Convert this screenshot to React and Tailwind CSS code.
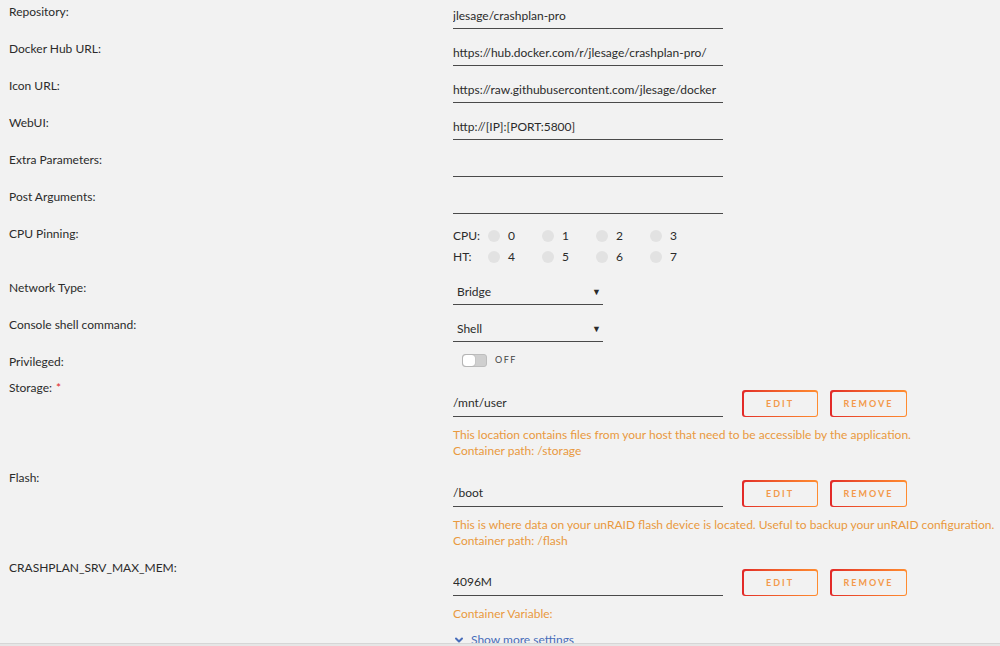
import { ChevronDown } from "lucide-react";

const textRows = [
  { label: "Repository:", value: "jlesage/crashplan-pro" },
  { label: "Docker Hub URL:", value: "https://hub.docker.com/r/jlesage/crashplan-pro/" },
  { label: "Icon URL:", value: "https://raw.githubusercontent.com/jlesage/docker" },
  { label: "WebUI:", value: "http://[IP]:[PORT:5800]" },
  { label: "Extra Parameters:", value: "" },
  { label: "Post Arguments:", value: "" },
];

const paths = [
  {
    label: "Storage:",
    required: true,
    value: "/mnt/user",
    desc: ["This location contains files from your host that need to be accessible by the application.", "Container path: /storage"],
  },
  {
    label: "Flash:",
    value: "/boot",
    desc: ["This is where data on your unRAID flash device is located. Useful to backup your unRAID configuration.", "Container path: /flash"],
  },
];

function Label({ children, required }) {
  return (
    <div className="w-[444px] shrink-0 pt-[4px] leading-4 text-[12px] text-[#2b2b2b]">
      {children}
      {required && <span className="ml-1 text-[#e22828]">*</span>}
    </div>
  );
}

function Input({ value, className = "" }) {
  return (
    <div className={"w-[270px] flex items-center overflow-hidden whitespace-nowrap border-b border-[#4a4a4a] text-[12px] text-[#2b2b2b] " + className}>
      {value}
    </div>
  );
}

function OutlineButton({ children, width }) {
  return (
    <div className={"h-[27px] rounded-[3px] bg-gradient-to-r from-[#e22828] to-[#ff8c2f] p-[1.5px] " + width}>
      <div className="flex h-full items-center justify-center rounded-[2px] bg-[#f2f2f2] text-[9px] font-bold tracking-[2px] text-[#f39a4c]">
        {children}
      </div>
    </div>
  );
}

function ButtonPair() {
  return (
    <div className="ml-[19px] flex gap-[12px]">
      <OutlineButton width="w-[76px]">EDIT</OutlineButton>
      <OutlineButton width="w-[77px]">REMOVE</OutlineButton>
    </div>
  );
}

function PathRow({ label, required, value, desc }) {
  return (
    <div className="flex">
      <Label required={required}>{label}</Label>
      <div className="pt-[14px] pb-[7px]">
        <div className="flex items-center">
          <Input value={value} className="h-[27px]" />
          <ButtonPair />
        </div>
        <div className="mt-[10px] text-[12px] leading-4 text-[#e9993e] whitespace-nowrap">
          {desc.map((d) => (
            <div key={d}>{d}</div>
          ))}
        </div>
      </div>
    </div>
  );
}

function Select({ value }) {
  return (
    <div className="mt-[3px] flex h-[26px] w-[150px] items-center justify-between border-b border-[#4a4a4a] pl-[4px] pr-[2px] text-[12px] text-[#2b2b2b]">
      <span>{value}</span>
      <span className="text-[9px]">▼</span>
    </div>
  );
}

function CpuLine({ name, cores }) {
  return (
    <div className="flex h-[21px] items-center text-[12px] text-[#2b2b2b]">
      <span className="w-[35px]">{name}</span>
      {cores.map((c) => (
        <div key={c} className="flex w-[54px] items-center">
          <span className="h-[12px] w-[12px] rounded-full bg-[#e2e2e2]" />
          <span className="ml-[8px]">{c}</span>
        </div>
      ))}
    </div>
  );
}

export default function App() {
  return (
    <div className="flex h-[646px] flex-col overflow-hidden bg-[#f2f2f2]" style={{ fontFamily: "Lato, 'Open Sans', sans-serif" }}>
      <div className="flex-1 overflow-hidden pl-[9px]">
        {textRows.map((r) => (
          <div key={r.label} className="flex h-[37px]">
            <Label>{r.label}</Label>
            <Input value={r.value} className="mt-[3px] h-[26px]" />
          </div>
        ))}

        <div className="flex h-[54px]">
          <Label>CPU Pinning:</Label>
          <div className="pt-[3px]">
            <CpuLine name="CPU:" cores={[0, 1, 2, 3]} />
            <CpuLine name="HT:" cores={[4, 5, 6, 7]} />
          </div>
        </div>

        <div className="flex h-[37px]">
          <Label>Network Type:</Label>
          <Select value="Bridge" />
        </div>
        <div className="flex h-[37px]">
          <Label>Console shell command:</Label>
          <Select value="Shell" />
        </div>

        <div className="flex h-[26px]">
          <Label>Privileged:</Label>
          <div className="ml-[9px] flex h-[20px] items-center">
            <div className="flex h-[13px] w-[25px] items-center rounded-[3px] border border-[#bdbdbd] bg-[#cfcfcf]">
              <span className="h-[11px] w-[12px] rounded-[3px] bg-white shadow-[0_0_1px_rgba(0,0,0,0.4)]" />
            </div>
            <span className="ml-[8px] text-[9px] tracking-[1.5px] text-[#444]">OFF</span>
          </div>
        </div>

        {paths.map((p) => (
          <PathRow key={p.label} {...p} />
        ))}

        <div className="flex">
          <Label>CRASHPLAN_SRV_MAX_MEM:</Label>
          <div className="pt-[13px]">
            <div className="flex items-center">
              <Input value="4096M" className="h-[27px] border-[#2a2a2a]" />
              <ButtonPair />
            </div>
            <div className="mt-[10px] text-[12px] leading-4 text-[#e9993e]">Container Variable:</div>
            <div className="mt-[10px] flex items-center gap-[6px] text-[12px] leading-4 text-[#486dba]">
              <ChevronDown size={12} strokeWidth={4} />
              <span>Show more settings</span>
            </div>
          </div>
        </div>
      </div>
      <div className="h-[3px] shrink-0 border-t border-[#d6d6d6] bg-[#e6e6e6]" />
    </div>
  );
}
